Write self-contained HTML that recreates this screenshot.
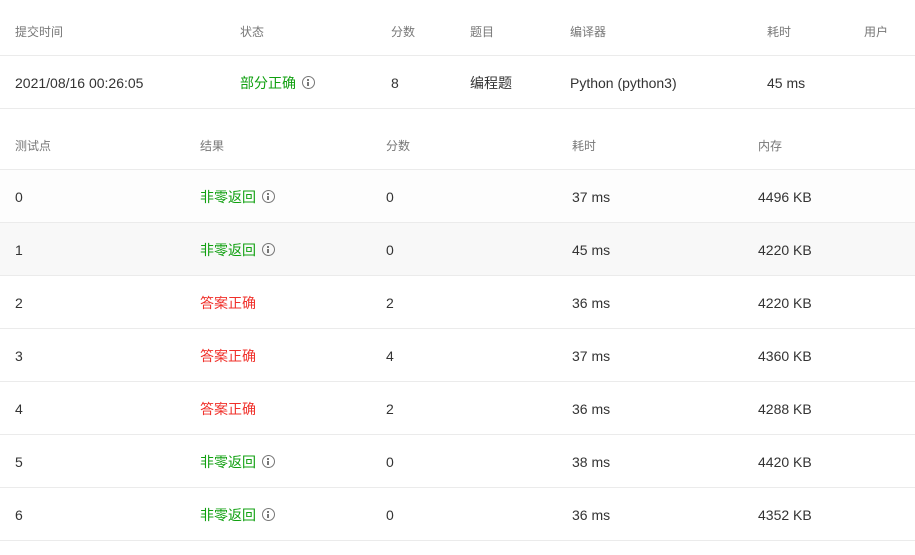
<!DOCTYPE html>
<html><head><meta charset="utf-8"><style>
body{margin:0;width:915px;height:555px;background:#fff;font-family:"Liberation Sans","Noto Sans CJK SC",sans-serif;position:relative;overflow:hidden;color:#333}
.t{position:absolute;white-space:nowrap;line-height:18px}
.h{font-size:12px;color:#777}
.c{font-size:14px;color:#333}
.g{font-size:14px;color:#10a010}
.r{font-size:14px;color:#f0302a}
.line{position:absolute;left:0;width:915px;height:1px;background:#ebebeb}
.bg{position:absolute;left:0;width:915px;height:52px}
.i{display:inline-block;width:13px;height:13px;border:1.4px solid #777;border-radius:50%;margin-left:6px;vertical-align:-1px;position:relative;box-sizing:border-box}
.i:before{content:"";position:absolute;left:4.4px;top:2px;width:1.6px;height:1.6px;background:#777}
.i:after{content:"";position:absolute;left:4.4px;top:4.6px;width:1.6px;height:4.6px;background:#777}
</style></head><body>
<div class="t h" style="left:15px;top:23px">提交时间</div>
<div class="t h" style="left:240px;top:23px">状态</div>
<div class="t h" style="left:391px;top:23px">分数</div>
<div class="t h" style="left:470px;top:23px">题目</div>
<div class="t h" style="left:570px;top:23px">编译器</div>
<div class="t h" style="left:767px;top:23px">耗时</div>
<div class="t h" style="left:864px;top:23px">用户</div>
<div class="line" style="top:55px"></div>
<div class="t c" style="left:15px;top:74px">2021/08/16 00:26:05</div>
<div class="t g" style="left:240px;top:74px">部分正确<span class="i"></span></div>
<div class="t c" style="left:391px;top:74px">8</div>
<div class="t c" style="left:470px;top:74px">编程题</div>
<div class="t c" style="left:570px;top:74px">Python (python3)</div>
<div class="t c" style="left:767px;top:74px">45 ms</div>
<div class="line" style="top:108px"></div>

<div class="t h" style="left:15px;top:137px">测试点</div>
<div class="t h" style="left:200px;top:137px">结果</div>
<div class="t h" style="left:386px;top:137px">分数</div>
<div class="t h" style="left:572px;top:137px">耗时</div>
<div class="t h" style="left:758px;top:137px">内存</div>
<div class="line" style="top:169px"></div>

<div class="bg" style="top:170px;background:#fdfdfd"></div>
<div class="bg" style="top:223px;background:#f8f8f8"></div>

<div class="t c" style="left:15px;top:188px">0</div><div class="t g" style="left:200px;top:188px">非零返回<span class="i"></span></div><div class="t c" style="left:386px;top:188px">0</div><div class="t c" style="left:572px;top:188px">37 ms</div><div class="t c" style="left:758px;top:188px">4496 KB</div>
<div class="line" style="top:222px"></div>
<div class="t c" style="left:15px;top:241px">1</div><div class="t g" style="left:200px;top:241px">非零返回<span class="i"></span></div><div class="t c" style="left:386px;top:241px">0</div><div class="t c" style="left:572px;top:241px">45 ms</div><div class="t c" style="left:758px;top:241px">4220 KB</div>
<div class="line" style="top:275px"></div>
<div class="t c" style="left:15px;top:294px">2</div><div class="t r" style="left:200px;top:294px">答案正确</div><div class="t c" style="left:386px;top:294px">2</div><div class="t c" style="left:572px;top:294px">36 ms</div><div class="t c" style="left:758px;top:294px">4220 KB</div>
<div class="line" style="top:328px"></div>
<div class="t c" style="left:15px;top:347px">3</div><div class="t r" style="left:200px;top:347px">答案正确</div><div class="t c" style="left:386px;top:347px">4</div><div class="t c" style="left:572px;top:347px">37 ms</div><div class="t c" style="left:758px;top:347px">4360 KB</div>
<div class="line" style="top:381px"></div>
<div class="t c" style="left:15px;top:400px">4</div><div class="t r" style="left:200px;top:400px">答案正确</div><div class="t c" style="left:386px;top:400px">2</div><div class="t c" style="left:572px;top:400px">36 ms</div><div class="t c" style="left:758px;top:400px">4288 KB</div>
<div class="line" style="top:434px"></div>
<div class="t c" style="left:15px;top:453px">5</div><div class="t g" style="left:200px;top:453px">非零返回<span class="i"></span></div><div class="t c" style="left:386px;top:453px">0</div><div class="t c" style="left:572px;top:453px">38 ms</div><div class="t c" style="left:758px;top:453px">4420 KB</div>
<div class="line" style="top:487px"></div>
<div class="t c" style="left:15px;top:506px">6</div><div class="t g" style="left:200px;top:506px">非零返回<span class="i"></span></div><div class="t c" style="left:386px;top:506px">0</div><div class="t c" style="left:572px;top:506px">36 ms</div><div class="t c" style="left:758px;top:506px">4352 KB</div>
<div class="line" style="top:540px"></div>
</body></html>
